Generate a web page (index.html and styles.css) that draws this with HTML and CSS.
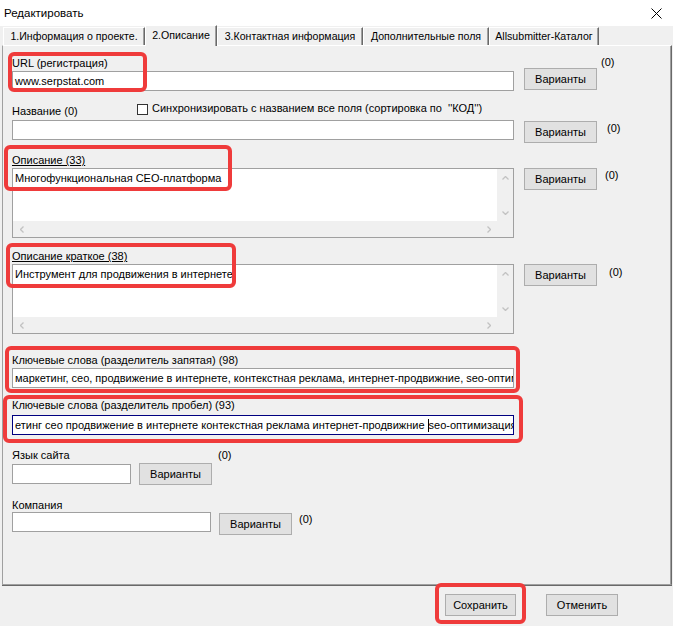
FILE: index.html
```html
<!DOCTYPE html>
<html lang="ru">
<head>
<meta charset="utf-8">
<title>Редактировать</title>
<link rel="stylesheet" href="styles.css">
</head>
<body>
<div class="titlebar">
  <span class="title">Редактировать</span>
  <svg class="close" width="11" height="11" viewBox="0 0 11 11"><path d="M0.5 0.5 L10.5 10.5 M10.5 0.5 L0.5 10.5" stroke="#000" stroke-width="1" fill="none"/></svg>
</div>
<div class="tabs">
  <div class="tab tab-info">1.Информация о проекте.</div>
  <div class="tab tab-desc active">2.Описание</div>
  <div class="tab tab-contact">3.Контактная информация</div>
  <div class="tab tab-extra">Дополнительные поля</div>
  <div class="tab tab-catalog">Allsubmitter-Каталог</div>
</div>
<div class="panel">
  <div class="row row-url">
    <div class="col">
      <div class="label">URL (регистрация)</div>
      <div class="field field-url">www.serpstat.com</div>
    </div>
    <div class="btn btn-url">Варианты</div>
    <div class="count count-url">(0)</div>
  </div>

  <div class="row row-name">
    <div class="col">
      <div class="label label-name">
        <span class="name-text">Название (0)</span>
        <span class="checkbox"></span>
        <span class="sync">Синхронизировать с названием все поля (сортировка по &nbsp;''КОД'')</span>
      </div>
      <div class="field field-name"></div>
    </div>
    <div class="btn btn-name">Варианты</div>
    <div class="count count-name">(0)</div>
  </div>

  <div class="row row-desc">
    <div class="col">
      <div class="label"><u>Описание (33)</u></div>
      <div class="textarea">
        <div class="ta-text">Многофункциональная СЕО-платформа</div>
        <div class="vscroll">
          <span class="arrow"><svg width="7" height="4" viewBox="0 0 7 4"><polyline points="0.5,3.5 3.5,0.5 6.5,3.5"/></svg></span>
          <span class="arrow"><svg width="7" height="4" viewBox="0 0 7 4"><polyline points="0.5,0.5 3.5,3.5 6.5,0.5"/></svg></span>
        </div>
        <div class="hscroll">
          <span class="arrow"><svg width="4" height="7" viewBox="0 0 4 7"><polyline points="3.5,0.5 0.5,3.5 3.5,6.5"/></svg></span>
          <span class="arrow"><svg width="4" height="7" viewBox="0 0 4 7"><polyline points="0.5,0.5 3.5,3.5 0.5,6.5"/></svg></span>
        </div>
        <div class="corner"></div>
      </div>
    </div>
    <div class="btn btn-desc">Варианты</div>
    <div class="count count-desc">(0)</div>
  </div>

  <div class="row row-short">
    <div class="col">
      <div class="label"><u>Описание краткое (38)</u></div>
      <div class="textarea">
        <div class="ta-text">Инструмент для продвижения в интернете</div>
        <div class="vscroll">
          <span class="arrow"><svg width="7" height="4" viewBox="0 0 7 4"><polyline points="0.5,3.5 3.5,0.5 6.5,3.5"/></svg></span>
          <span class="arrow"><svg width="7" height="4" viewBox="0 0 7 4"><polyline points="0.5,0.5 3.5,3.5 6.5,0.5"/></svg></span>
        </div>
        <div class="hscroll">
          <span class="arrow"><svg width="4" height="7" viewBox="0 0 4 7"><polyline points="3.5,0.5 0.5,3.5 3.5,6.5"/></svg></span>
          <span class="arrow"><svg width="4" height="7" viewBox="0 0 4 7"><polyline points="0.5,0.5 3.5,3.5 0.5,6.5"/></svg></span>
        </div>
        <div class="corner"></div>
      </div>
    </div>
    <div class="btn btn-short">Варианты</div>
    <div class="count count-short">(0)</div>
  </div>

  <div class="row row-kw1">
    <div class="col">
      <div class="label">Ключевые слова (разделитель запятая) (98)</div>
      <div class="field field-kw1">маркетинг, сео, продвижение в интернете, контекстная реклама, интернет-продвижние, seo-оптимизация</div>
    </div>
  </div>

  <div class="row row-kw2">
    <div class="col">
      <div class="label">Ключевые слова (разделитель пробел) (93)</div>
      <div class="field field-kw2 focused">етинг сео продвижение в интернете контекстная реклама интернет-продвижние <span class="caret"></span>seo-оптимизация</div>
    </div>
  </div>

  <div class="row row-lang">
    <div class="col col-lang">
      <div class="label">Язык сайта</div>
      <div class="field field-lang"></div>
    </div>
    <div class="btn btn-lang">Варианты</div>
    <div class="count count-lang">(0)</div>
  </div>

  <div class="row row-company">
    <div class="col col-company">
      <div class="label">Компания</div>
      <div class="field field-company"></div>
    </div>
    <div class="btn btn-company">Варианты</div>
    <div class="count count-company">(0)</div>
  </div>
</div>
<div class="footer">
  <div class="btn btn-save">Сохранить</div>
  <div class="btn btn-cancel">Отменить</div>
</div>

<div class="mark mark-url"></div>
<div class="mark mark-desc"></div>
<div class="mark mark-short"></div>
<div class="mark mark-kw1"></div>
<div class="mark mark-kw2"></div>
<div class="mark mark-save"></div>
</body>
</html>
```

FILE: styles.css
```css
* { box-sizing: border-box; }
html, body { margin: 0; padding: 0; }
body {
  width: 673px;
  height: 626px;
  overflow: hidden;
  position: relative;
  background: #f0f0f0;
  font-family: "Liberation Sans", Arial, sans-serif;
  font-size: 11px;
  color: #000;
}

/* title bar */
.titlebar {
  height: 26px;
  background: #fff;
  display: flex;
  align-items: center;
  justify-content: space-between;
  padding: 0 11px 0 4px;
}
.title { font-size: 11.5px; }
.close { display: block; }

/* tabs */
.tabs {
  height: 20px;
  display: flex;
  align-items: flex-end;
  padding-left: 3px;
  position: relative;
  z-index: 2;
}
.tab {
  height: 18px;
  margin-bottom: 1px;
  line-height: 17px;
  font-size: 10.6px;
  text-align: center;
  white-space: nowrap;
  overflow: hidden;
  border-top: 1px solid #fff;
  border-left: 1px solid #fff;
  border-right: 1px solid #696969;
  box-shadow: inset -1px 0 0 #a0a0a0;
}
.tab.active {
  height: 21px;
  margin-bottom: 0;
  line-height: 18px;
  background: #f0f0f0;
}
.tab-info { width: 142px; }
.tab-desc { width: 72px; }
.tab-contact { width: 146px; }
.tab-extra { width: 126px; }
.tab-catalog { width: 110px; }

/* panel */
.panel {
  margin-top: -1px;
  margin-left: 2px;
  width: 670px;
  height: 540px;
  border-top: 1px solid #fff;
  border-left: 1px solid #a0a0a0;
  border-right: 1px solid #696969;
  border-bottom: 1px solid #a0a0a0;
  box-shadow: inset -1px 0 0 #a0a0a0, 0 1px 0 #696969;
  padding-left: 9px;
  display: flex;
  flex-direction: column;
}

.row { display: flex; align-items: flex-start; }
.col { width: 502px; display: flex; flex-direction: column; }
.col-lang { width: 119px; }
.col-company { width: 199px; }

.label { height: 13px; line-height: 13px; white-space: nowrap; }
.label-name { display: flex; align-items: flex-start; }
.name-text { width: 125px; flex: none; }
.checkbox {
  width: 11px; height: 11px;
  margin-top: -1px;
  border: 1px solid #333;
  background: #fff;
  flex: none;
}
.sync { margin-left: 4px; margin-top: -3px; }

.field {
  height: 20px;
  background: #fff;
  border: 1px solid #a0a0a0;
  padding: 0 2px;
  line-height: 18px;
  white-space: nowrap;
  overflow: hidden;
}
.field.focused { border-color: #000080; }
.caret {
  display: inline-block;
  width: 1px;
  height: 13px;
  background: #000;
  vertical-align: -3px;
}

.textarea {
  height: 70px;
  margin-top: 1px;
  border: 1px solid #a0a0a0;
  display: grid;
  grid-template-columns: 1fr 16px;
  grid-template-rows: 1fr 16px;
}
.ta-text {
  background: #fff;
  padding: 2px 2px;
  line-height: 14px;
  white-space: nowrap;
  overflow: hidden;
}
.vscroll { display: flex; flex-direction: column; justify-content: space-between; }
.hscroll { display: flex; justify-content: space-between; }
.arrow {
  width: 16px; height: 17px;
  display: flex; align-items: center; justify-content: center;
}
.hscroll .arrow { width: 17px; height: 16px; }
.arrow svg polyline { fill: none; stroke: #c2c2c2; stroke-width: 1.3; }

.btn {
  width: 73px;
  height: 22px;
  background: #e1e1e1;
  border: 1px solid #adadad;
  display: flex;
  align-items: center;
  justify-content: center;
  flex: none;
}
.count { line-height: 13px; flex: none; }

/* row placement */
.row-url { margin-top: 11px; }
.field-url { margin-top: 1px; }
.btn-url { margin-left: 10px; margin-top: 11px; }
.count-url { margin-left: 4px; margin-top: -1px; }

.row-name { margin-top: 14px; }
.field-name { margin-top: 2px; }
.btn-name { margin-left: 10px; margin-top: 16px; }
.count-name { margin-left: 10px; margin-top: 17px; }

.row-desc { margin-top: 11px; }
.btn-desc { margin-left: 10px; margin-top: 14px; }
.count-desc { margin-left: 8px; margin-top: 15px; }

.row-short { margin-top: 12px; }
.btn-short { margin-left: 10px; margin-top: 14px; }
.count-short { margin-left: 12px; margin-top: 16px; }

.row-kw1 { margin-top: 20px; }
.field-kw1 { margin-top: 1px; }

.row-kw2 { margin-top: 11px; }
.field-kw2 { margin-top: 3px; }

.row-lang { margin-top: 14px; }
.field-lang { margin-top: 2px; }
.btn-lang { margin-left: 8px; margin-top: 14px; }
.count-lang { margin-left: 6px; margin-top: 0; }

.row-company { margin-top: 14px; }
.btn-company { margin-left: 8px; margin-top: 14px; }
.count-company { margin-left: 7px; margin-top: 14px; }

/* footer buttons */
.footer {
  display: flex;
  gap: 30px;
  padding-left: 445px;
  margin-top: 9px;
}
.btn-save { width: 71px; }
.btn-cancel { width: 72px; }

/* red annotation frames (overlay) */
.mark {
  position: absolute;
  border: 4px solid #ef3b3b;
  border-radius: 6px;
  pointer-events: none;
}
.mark-url { left: 8px; top: 52px; width: 139px; height: 40px; }
.mark-desc { left: 4px; top: 145px; width: 228px; height: 46px; }
.mark-short { left: 6px; top: 243px; width: 230px; height: 45px; }
.mark-kw1 { left: 5px; top: 346px; width: 515px; height: 47px; }
.mark-kw2 { left: 3px; top: 395px; width: 520px; height: 48px; }
.mark-save { left: 435px; top: 583px; width: 91px; height: 41px; }
```
